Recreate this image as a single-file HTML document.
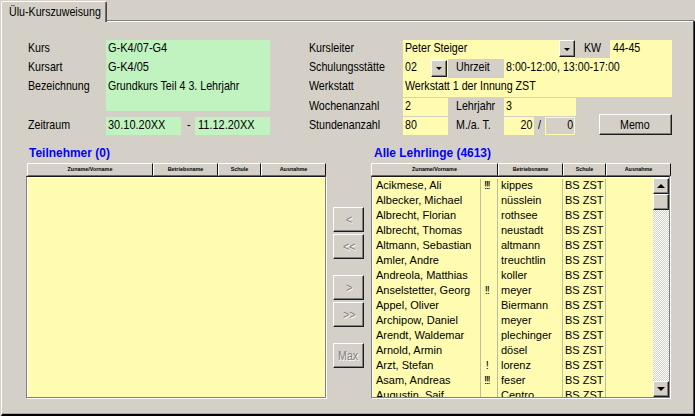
<!DOCTYPE html>
<html lang="de">
<head>
<meta charset="utf-8">
<title>Ülu-Kurszuweisung</title>
<style>
html,body{margin:0;padding:0;}
body{width:695px;height:416px;overflow:hidden;background:#d4d0c8;position:relative;
 font-family:"Liberation Sans",sans-serif;font-size:13px;color:#000;}
.a{position:absolute;white-space:nowrap;}
.t{position:absolute;white-space:nowrap;font-size:13px;line-height:15px;transform-origin:0 50%;transform:scaleX(.82);}
.tr{transform-origin:100% 50%;}
.w{transform:scaleX(.845);}
.g{position:absolute;background:#c0f3c0;}
.y{position:absolute;background:#fffbb1;}
.h{position:absolute;top:163px;height:13px;box-sizing:border-box;background:#d4d0c8;
 border-top:1px solid #fff;border-left:1px solid #fff;border-right:1px solid #101010;border-bottom:1px solid #686868;
 font-size:5.4px;font-weight:bold;text-align:center;line-height:11px;}
.btn{position:absolute;box-sizing:border-box;background:#d4d0c8;
 border-top:1px solid #fff;border-left:1px solid #fff;border-right:1px solid #1c1c1c;border-bottom:1px solid #1c1c1c;
 box-shadow:inset -1px -1px 0 #808080;}
.hd{position:absolute;font-weight:bold;color:#0000ff;font-size:13px;line-height:15px;white-space:nowrap;transform-origin:0 50%;transform:scaleX(.92);}
.dis{color:#808080;text-shadow:1px 1px 0 #fff;}
.r{position:absolute;left:0;width:280px;height:15px;font-size:11px;line-height:15px;white-space:nowrap;}
.r span{position:absolute;top:0;}
.c1{left:3px}.c2{left:107.3px;width:14px;text-align:center;letter-spacing:-1.2px;text-indent:-1.2px}.c3{left:128px}.c4{left:192px}
.vl{position:absolute;top:1px;width:1px;height:218px;background:#bdbda0;}
.fg{position:absolute;top:176px;height:222px;box-sizing:border-box;border:1px solid #808080;border-top-color:#181818;}
.fw{position:absolute;top:177px;height:222px;box-sizing:border-box;border:1px solid #fff;}
.lst{position:absolute;top:178px;height:219px;background:#fffbb1;overflow:hidden;}
.arr{position:absolute;width:0;height:0;border-left:3px solid transparent;border-right:3px solid transparent;border-top:3px solid #000;}
</style>
</head>
<body>
<!-- tab panel -->
<div class="a" style="left:1px;top:20px;width:693px;height:1px;background:#808080;"></div>
<div class="a" id="panel" style="left:1px;top:21px;width:694px;height:395px;box-sizing:border-box;border-top:1px solid #fff;border-left:1px solid #fff;border-right:2px solid #000;border-bottom:2px solid #000;border-right-color:#000;"></div>
<div class="a" style="left:693px;top:21px;width:1px;height:393px;background:#484848;"></div>
<div class="a" style="left:2px;top:413px;width:691px;height:1px;background:#aaa7a1;"></div>
<div class="a" id="tab" style="left:1px;top:1px;width:106px;height:21px;box-sizing:border-box;background:#d4d0c8;border-top:1px solid #fff;border-left:1px solid #fff;border-right:1px solid #484848;border-radius:2px 2px 0 0;box-shadow:inset -1px 0 0 #707070;"></div>
<div class="a" style="left:2px;top:20px;width:103px;height:3px;background:#d4d0c8;"></div>
<div class="t" style="left:8.7px;top:3.6px;">Ülu-Kurszuweisung</div>

<!-- left labels -->
<div class="t" style="left:28px;top:40px;">Kurs</div>
<div class="t" style="left:28px;top:59px;">Kursart</div>
<div class="t" style="left:28px;top:78px;">Bezeichnung</div>
<div class="t" style="left:28px;top:117px;">Zeitraum</div>
<div class="g" style="left:106px;top:40px;width:164px;height:71px;"></div>
<div class="t w" style="left:107.8px;top:40px;">G-K4/07-G4</div>
<div class="t w" style="left:107.8px;top:59px;">G-K4/05</div>
<div class="t" style="left:107.8px;top:78px;">Grundkurs Teil 4 3. Lehrjahr</div>
<div class="g" style="left:106px;top:117px;width:75px;height:18px;"></div>
<div class="g" style="left:195px;top:117px;width:75px;height:18px;"></div>
<div class="t w" style="left:107.8px;top:117px;">30.10.20XX</div>
<div class="t" style="left:186.5px;top:117px;">-</div>
<div class="t w" style="left:197.5px;top:117px;">11.12.20XX</div>

<!-- right labels -->
<div class="t" style="left:309px;top:40px;">Kursleiter</div>
<div class="t" style="left:309px;top:59px;">Schulungsstätte</div>
<div class="t" style="left:309px;top:78px;">Werkstatt</div>
<div class="t" style="left:309px;top:98px;">Wochenanzahl</div>
<div class="t" style="left:309px;top:117px;">Stundenanzahl</div>

<div class="y" style="left:403px;top:40px;width:269px;height:57px;"></div>
<div class="a" style="left:575px;top:40px;width:35px;height:18px;background:#d4d0c8;"></div>
<div class="a" style="left:448px;top:59px;width:56px;height:19px;background:#d4d0c8;"></div>
<div class="t" style="left:405px;top:40px;">Peter Steiger</div>
<div class="btn" style="left:559px;top:40px;width:16px;height:17px;"></div>
<div class="arr" style="left:564px;top:48px;"></div>
<div class="t" style="left:584px;top:40px;">KW</div>
<div class="t" style="left:612.5px;top:40px;">44-45</div>

<div class="t" style="left:405px;top:59px;">02</div>
<div class="btn" style="left:431px;top:60px;width:16px;height:17px;"></div>
<div class="arr" style="left:436px;top:67px;"></div>
<div class="t" style="left:455.5px;top:59px;">Uhrzeit</div>
<div class="t" style="left:505.8px;top:59px;">8:00-12:00, 13:00-17:00</div>

<div class="t" style="left:405px;top:78px;">Werkstatt 1 der Innung ZST</div>

<div class="y" style="left:403px;top:98px;width:45px;height:18px;"></div>
<div class="t" style="left:405px;top:98px;">2</div>
<div class="t" style="left:455.5px;top:98px;">Lehrjahr</div>
<div class="y" style="left:504px;top:98px;width:72px;height:18px;"></div>
<div class="t" style="left:505.8px;top:98px;">3</div>

<div class="y" style="left:403px;top:117px;width:45px;height:18px;"></div>
<div class="t" style="left:405px;top:117px;">80</div>
<div class="t" style="left:455.5px;top:117px;">M./a. T.</div>
<div class="y" style="left:504px;top:117px;width:30px;height:18px;"></div>
<div class="t tr" style="right:162.5px;top:117px;">20</div>
<div class="t" style="left:537.6px;top:117px;">/</div>
<div class="a" style="left:545px;top:117px;width:30px;height:18px;box-sizing:border-box;border:1px solid #fffbb1;background:#d4d0c8;"></div>
<div class="t tr" style="right:121.5px;top:117px;">0</div>

<div class="btn" style="left:599px;top:114px;width:73px;height:21px;"></div>
<div class="t" style="left:619.8px;top:117px;">Memo</div>

<!-- headings -->
<div class="hd" style="left:28.6px;top:145px;">Teilnehmer (0)</div>
<div class="hd" style="left:373.6px;top:145px;">Alle Lehrlinge (4613)</div>

<!-- left grid -->
<div class="h" style="left:27px;width:126px;">Zuname/Vorname</div>
<div class="h" style="left:153px;width:65px;">Betriebsname</div>
<div class="h" style="left:218px;width:43px;">Schule</div>
<div class="h" style="left:261px;width:65px;">Ausnahme</div>
<div class="fw" style="left:27px;width:300px;"></div>
<div class="fg" style="left:26px;width:300px;"></div>
<div class="lst" style="left:28px;width:297px;"></div>

<!-- middle buttons -->
<div class="btn" style="left:333px;top:207px;width:31px;height:25px;"></div>
<div class="btn" style="left:333px;top:234px;width:31px;height:25px;"></div>
<div class="btn" style="left:333px;top:275px;width:31px;height:25px;"></div>
<div class="btn" style="left:333px;top:302px;width:31px;height:25px;"></div>
<div class="btn" style="left:333px;top:343px;width:31px;height:25px;"></div>
<div class="t dis" style="left:345.5px;top:212px;">&lt;</div>
<div class="t dis" style="left:342.5px;top:239px;">&lt;&lt;</div>
<div class="t dis" style="left:345.5px;top:280px;">&gt;</div>
<div class="t dis" style="left:342.5px;top:307px;">&gt;&gt;</div>
<div class="t dis" style="left:338px;top:348px;">Max</div>

<!-- right grid -->
<div class="h" style="left:371px;width:127px;">Zuname/Vorname</div>
<div class="h" style="left:498px;width:65px;">Betriebsname</div>
<div class="h" style="left:563px;width:43px;">Schule</div>
<div class="h" style="left:606px;width:65px;">Ausnahme</div>
<div class="fw" style="left:372px;width:299px;"></div>
<div class="fg" style="left:371px;width:299px;"></div>
<div class="lst" id="rlist" style="left:373px;width:296px;">
 <div class="vl" style="left:107px;"></div>
 <div class="vl" style="left:124px;"></div>
 <div class="vl" style="left:189px;"></div>
 <div class="vl" style="left:232px;"></div>
 <div class="r" style="top:0px"><span class="c1">Acikmese, Ali</span><span class="c2">!!!</span><span class="c3">kippes</span><span class="c4">BS ZST</span></div>
 <div class="r" style="top:15px"><span class="c1">Albecker, Michael</span><span class="c3">nüsslein</span><span class="c4">BS ZST</span></div>
 <div class="r" style="top:30px"><span class="c1">Albrecht, Florian</span><span class="c3">rothsee</span><span class="c4">BS ZST</span></div>
 <div class="r" style="top:45px"><span class="c1">Albrecht, Thomas</span><span class="c3">neustadt</span><span class="c4">BS ZST</span></div>
 <div class="r" style="top:60px"><span class="c1">Altmann, Sebastian</span><span class="c3">altmann</span><span class="c4">BS ZST</span></div>
 <div class="r" style="top:75px"><span class="c1">Amler, Andre</span><span class="c3">treuchtlin</span><span class="c4">BS ZST</span></div>
 <div class="r" style="top:90px"><span class="c1">Andreola, Matthias</span><span class="c3">koller</span><span class="c4">BS ZST</span></div>
 <div class="r" style="top:105px"><span class="c1">Anselstetter, Georg</span><span class="c2">!!</span><span class="c3">meyer</span><span class="c4">BS ZST</span></div>
 <div class="r" style="top:120px"><span class="c1">Appel, Oliver</span><span class="c3">Biermann</span><span class="c4">BS ZST</span></div>
 <div class="r" style="top:135px"><span class="c1">Archipow, Daniel</span><span class="c3">meyer</span><span class="c4">BS ZST</span></div>
 <div class="r" style="top:150px"><span class="c1">Arendt, Waldemar</span><span class="c3">plechinger</span><span class="c4">BS ZST</span></div>
 <div class="r" style="top:165px"><span class="c1">Arnold, Armin</span><span class="c3">dösel</span><span class="c4">BS ZST</span></div>
 <div class="r" style="top:180px"><span class="c1">Arzt, Stefan</span><span class="c2">!</span><span class="c3">lorenz</span><span class="c4">BS ZST</span></div>
 <div class="r" style="top:195px"><span class="c1">Asam, Andreas</span><span class="c2">!!!</span><span class="c3">feser</span><span class="c4">BS ZST</span></div>
 <div class="r" style="top:210px"><span class="c1">Augustin, Saif</span><span class="c3">Centro</span><span class="c4">BS ZST</span></div>
 <!-- scrollbar -->
 <div class="a" style="left:280px;top:0;width:16px;height:219px;background:#d4d0c8;background-image:repeating-conic-gradient(#fff 0 25%,#d4d0c8 0 50%);background-size:2px 2px;"></div>
 <div class="btn" style="left:280px;top:0;width:16px;height:16px;"></div>
 <div class="btn" style="left:280px;top:16px;width:16px;height:16px;"></div>
 <div class="btn" style="left:280px;top:203px;width:16px;height:16px;"></div>
 <div class="a" style="left:284px;top:6px;width:0;height:0;border-left:4px solid transparent;border-right:4px solid transparent;border-bottom:4px solid #000;"></div>
 <div class="a" style="left:284px;top:209px;width:0;height:0;border-left:4px solid transparent;border-right:4px solid transparent;border-top:4px solid #000;"></div>
</div>
</body>
</html>
